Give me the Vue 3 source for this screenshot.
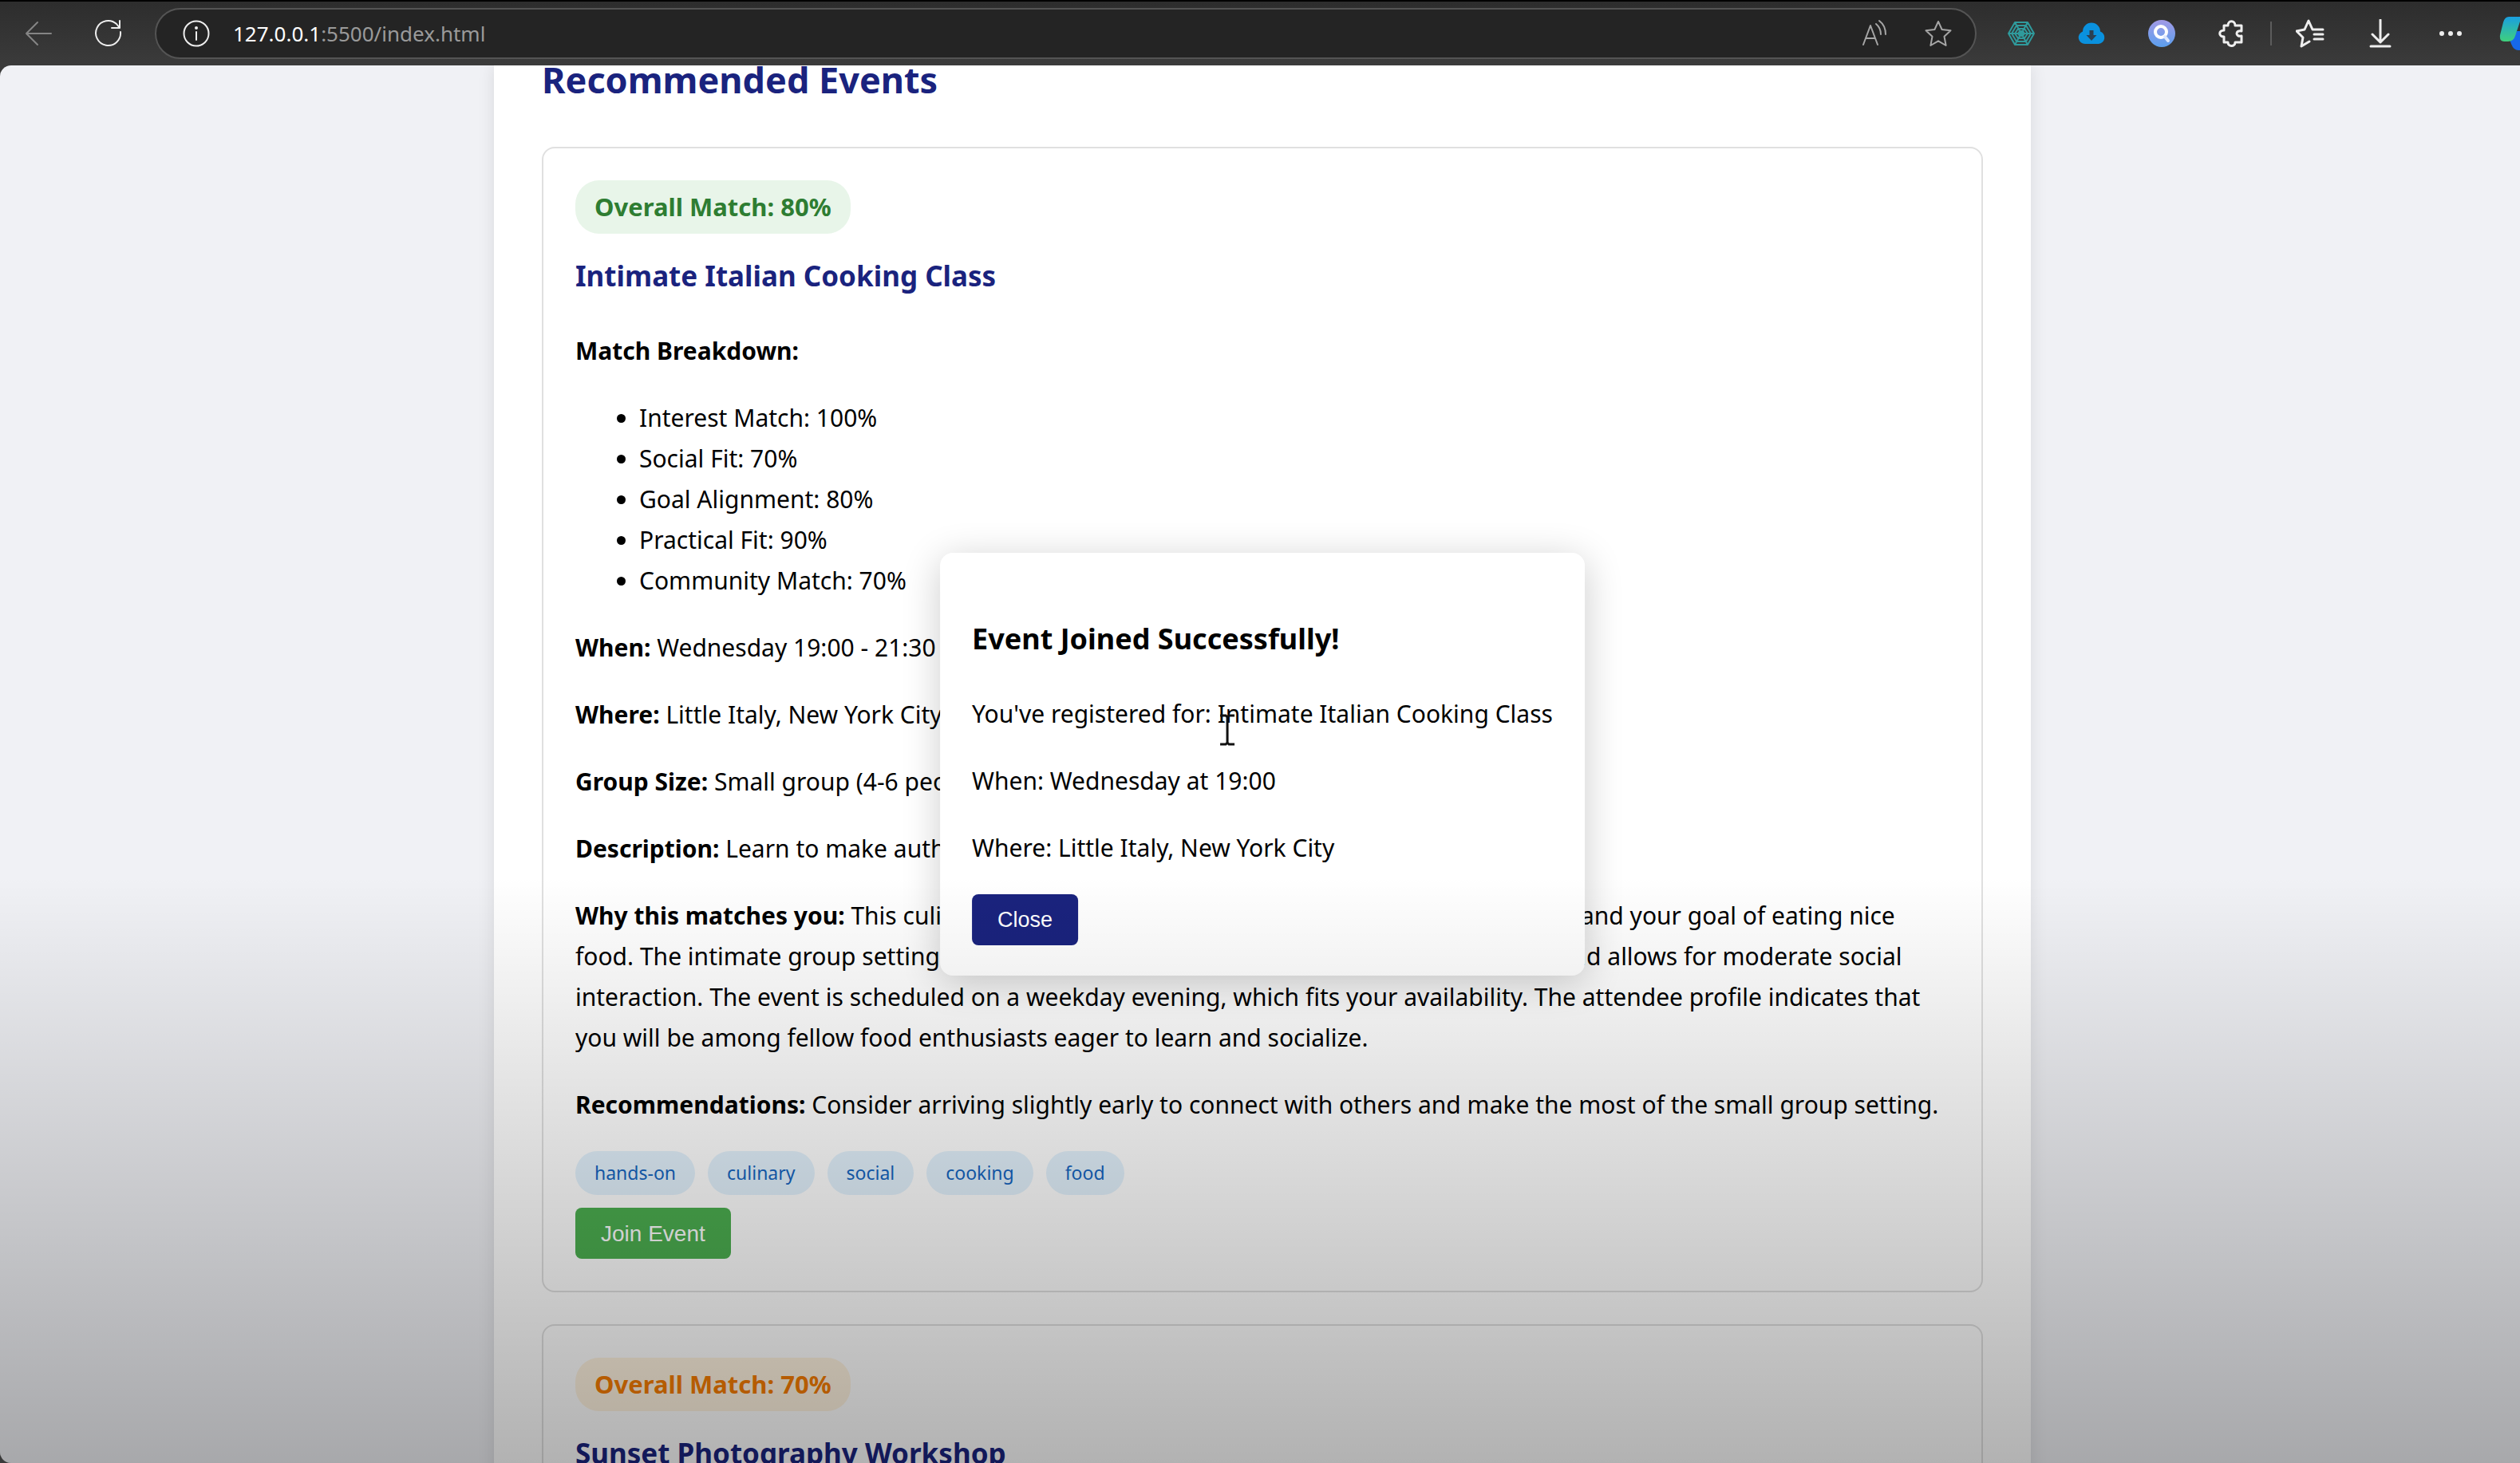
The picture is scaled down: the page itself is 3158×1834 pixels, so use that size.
<script setup>
const events = [
  {
    score: 80,
    level: 'high',
    title: 'Intimate Italian Cooking Class',
    breakdown: [
      ['Interest Match', 100],
      ['Social Fit', 70],
      ['Goal Alignment', 80],
      ['Practical Fit', 90],
      ['Community Match', 70],
    ],
    details: [
      ['When', 'Wednesday 19:00 - 21:30'],
      ['Where', 'Little Italy, New York City'],
      ['Group Size', 'Small group (4-6 people)'],
      ['Description', 'Learn to make authentic pasta'],
      [
        'Why this matches you',
        'This culinary class fits your interest in seasonal cooking together and your goal of eating nice food. The intimate group setting is just right for finding new friends over a simple meal and allows for moderate social interaction. The event is scheduled on a weekday evening, which fits your availability. The attendee profile indicates that you will be among fellow food enthusiasts eager to learn and socialize.',
      ],
      [
        'Recommendations',
        'Consider arriving slightly early to connect with others and make the most of the small group setting.',
      ],
    ],
    tags: ['hands-on', 'culinary', 'social', 'cooking', 'food'],
  },
  {
    score: 70,
    level: 'medium',
    title: 'Sunset Photography Workshop',
    breakdown: [],
    details: [],
    tags: [],
  },
]
</script>

<template>
  <div class="browser">
    <header class="toolbar">
      <button class="tool back" aria-label="Back">
        <svg width="36" height="36" viewBox="0 0 36 36"><path d="M34 18H3M17 4 3 18l14 14" /></svg>
      </button>
      <button class="tool reload" aria-label="Reload">
        <svg width="36" height="36" viewBox="0 0 36 36"><path d="M33 16a15.500 15.500 0 1 1-5-10l4 5M32 2v9h-10" /></svg>
      </button>
      <div class="address">
        <svg class="info" width="36" height="36" viewBox="0 0 36 36"><circle cx="18" cy="18" r="15.500" /><path d="M18 16v10" /><circle cx="18" cy="11" r="1" /></svg>
        <p class="url"><span>127.0.0.1</span>:5500/index.html</p>
        <button class="tool dim read" aria-label="Read aloud">
          <svg width="36" height="36" viewBox="0 0 36 36"><path d="M4 32 13 8l9 24M7 24h12M20 6q6 5 6 13M24 2q8 6 8 17" /></svg>
        </button>
        <button class="tool dim" aria-label="Add to favourites">
          <svg width="36" height="36" viewBox="0 0 36 36"><path d="m18 3 4.600 10 10.900 1.300-8 7.400L27.600 33 18 27.300 8.400 33l2.100-11.300-8-7.400L13.400 13z" /></svg>
        </button>
      </div>
      <div class="extensions">
        <button class="tool web" aria-label="Web extension">
          <svg width="36" height="36" viewBox="0 0 36 36"><path d="M10 4h16l8 14-8 14H10L2 18zM12 8h12l6 10-6 10H12L6 18zM14 12h8l4 6-4 6h-8l-4-6zM16 15h4l2 3-2 3h-4l-2-3zM10 4l16 28M26 4 10 32M2 18h32" /></svg>
        </button>
        <button class="tool" aria-label="Cloud download">
          <svg width="36" height="36" viewBox="0 0 36 36"><path class="cloud" d="M10 31a8 8 0 0 1-3-15.500 11 11 0 0 1 22 0A8 8 0 0 1 27 31z" /><path class="hole" d="M15.500 14h5v6h4L18 27l-6.500-7h4z" /></svg>
        </button>
        <button class="tool" aria-label="Search extension">
          <svg width="36" height="36" viewBox="0 0 36 36">
            <defs><linearGradient id="lens" x1="0" y1="0" x2="0" y2="1"><stop offset="0" stop-color="#a29ae6" /><stop offset="1" stop-color="#5b9fee" /></linearGradient></defs>
            <circle cx="18" cy="18" r="17" fill="url(#lens)" stroke="none" /><circle cx="17" cy="16" r="7" stroke="#fff" stroke-width="4" /><path d="m22 22 4 5" stroke="#dbe6ff" stroke-width="4" />
          </svg>
        </button>
        <button class="tool" aria-label="Extensions">
          <svg class="bold" width="36" height="36" viewBox="0 0 36 36"><path d="M8 8h5c0-7 9-7 9 0h8v7c-8-2-8 8 0 6v8h-8c0 6-9 6-9 0H8v-7c-7 0-7-8 0-8z" /></svg>
        </button>
        <span class="divider"></span>
        <button class="tool" aria-label="Favourites">
          <svg class="bold" width="36" height="36" viewBox="0 0 36 36"><path d="M34 13H21L16 2l-5 11-10 2 8 8-2 11 10-6M23 19h11M23 25h11" /></svg>
        </button>
        <button class="tool" aria-label="Downloads">
          <svg class="bold" width="36" height="36" viewBox="0 0 36 36"><path d="M18 1v28M8 19l10 10 10-10M6 34h24" /></svg>
        </button>
        <button class="tool" aria-label="More">
          <svg width="36" height="36" viewBox="0 0 36 36"><g fill="#eee" stroke="none"><circle cx="7" cy="18" r="3" /><circle cx="18" cy="18" r="3" /><circle cx="29" cy="18" r="3" /></g></svg>
        </button>
        <button class="tool copilot" aria-label="Copilot">
          <svg width="26" height="50" viewBox="0 0 26 50">
            <defs><linearGradient id="wing" x1="0" y1="0" x2="0" y2="1"><stop offset="0" stop-color="#1a9fe0" /><stop offset="1" stop-color="#3fd07c" /></linearGradient></defs>
            <path d="M12 30q8-2 10-8h6v24h-4q-6 0-9-8z" fill="#1668ea" stroke="none" /><path d="M12 4h16l-8 24q-2 7-9 7H6q-6 0-5-8L5 11q2-7 7-7z" fill="url(#wing)" stroke="none" />
          </svg>
        </button>
      </div>
    </header>

    <main class="page">
      <section class="sheet">
        <h2>Recommended Events</h2>
        <article v-for="event in events" :key="event.title" class="card">
          <span class="score" :class="event.level">Overall Match: {{ event.score }}%</span>
          <h3>{{ event.title }}</h3>
          <template v-if="event.breakdown.length">
            <p><strong>Match Breakdown:</strong></p>
            <ul>
              <li v-for="[name, value] in event.breakdown" :key="name">{{ name }}: {{ value }}%</li>
            </ul>
          </template>
          <p v-for="[label, text] in event.details" :key="label"><strong>{{ label }}:</strong> {{ text }}</p>
          <div v-if="event.tags.length" class="tags">
            <span v-for="tag in event.tags" :key="tag" class="tag">{{ tag }}</span>
          </div>
          <button class="action join">Join Event</button>
        </article>
      </section>

      <div class="modal" role="dialog" aria-labelledby="joined">
        <h3 id="joined">Event Joined Successfully!</h3>
        <p>You've registered for: Intimate Italian Cooking Class</p>
        <p>When: Wednesday at 19:00</p>
        <p>Where: Little Italy, New York City</p>
        <button class="action close">Close</button>
        <svg class="caret" width="20" height="40" viewBox="0 0 20 40"><path d="M1 2h7l2 2 2-2h7M10 4v32M1 38h7l2-2 2 2h7" /></svg>
      </div>
      <div class="shade"></div>
    </main>
  </div>
</template>

<style>
body {
  margin: 0;
  background: #2b2b2d;
}
</style>

<style scoped>
* {
  box-sizing: border-box;
}

.browser {
  display: flex;
  flex-direction: column;
  height: 100vh;
  overflow: hidden;
  background: #3a3a3a;
  font-family: "Noto Sans", "Open Sans", sans-serif;
  font-size: 30px;
  line-height: 51px;
  color: #000;
}

button {
  font: inherit;
  border: 0;
  padding: 0;
}

/* Browser toolbar */
.toolbar {
  flex: none;
  display: flex;
  align-items: center;
  height: 82px;
  padding-left: 30px;
  border-top: 2px solid #000;
  background: linear-gradient(#2d2d2d, #3b3b3b);
}

.toolbar svg {
  display: block;
  fill: none;
  stroke: #eee;
  stroke-width: 2;
  stroke-linecap: round;
  stroke-linejoin: round;
}

.toolbar .bold {
  stroke-width: 3;
}

.tool {
  flex: none;
  background: none;
}

.toolbar .back svg {
  stroke: #858585;
}

.reload {
  margin: 0 40px 0 52px;
}

.address {
  flex: 1;
  display: flex;
  align-items: center;
  gap: 44px;
  height: 64px;
  padding: 0 28px 0 32px;
  border: 2px solid #545454;
  border-radius: 32px;
  background: #242424;
}

.url {
  flex: 1;
  margin: 0 0 0 -16px;
  font-size: 26px;
  color: #9a9a9a;
}

.url span {
  color: #fff;
}

.toolbar .dim svg {
  stroke: #a6a6a6;
}

.extensions {
  display: flex;
  align-items: center;
  gap: 52px;
  padding-left: 38px;
}

.toolbar .web svg {
  stroke: #2f9a9c;
}

.toolbar .cloud {
  fill: #0a91de;
  stroke: none;
}

.toolbar .hole {
  fill: #2b3f52;
  stroke: none;
}

.divider {
  width: 2px;
  height: 30px;
  margin: 0 -22px;
  background: #5c5c5c;
}

.copilot {
  margin-left: -9px;
}

/* Page: runs slightly past the right edge of the window */
.page {
  position: relative;
  flex: 1;
  min-height: 0;
  overflow: hidden;
  margin-right: -6px;
  padding: 0 40px;
  border-radius: 14px 0 0 14px;
  background: #f0f1f5;
}

.sheet {
  max-width: 1926px;
  margin: 0 auto;
  padding: 0 60px 60px;
  background: #fff;
  box-shadow: 0 0 20px rgba(0, 0, 0, 0.1);
}

h2 {
  margin: 0 0 66px;
  font-size: 45px;
  line-height: 36px;
  color: #1a237e;
}

h3 {
  margin: 0 0 38px;
  font-size: 35px;
  line-height: 60px;
}

p {
  margin: 0 0 33px;
}

.card {
  margin-bottom: 40px;
  padding: 40px;
  border: 2px solid #e0e0e0;
  border-radius: 16px;
}

.card h3 {
  margin-top: 23px;
  color: #1a237e;
}

.score {
  display: block;
  width: fit-content;
  padding: 8px 24px;
  border-radius: 30px;
  font-size: 31px;
  font-weight: 700;
}

.high {
  background: #e8f5e9;
  color: #2e7d32;
}

.medium {
  background: #fff3e0;
  color: #f57c00;
}

ul {
  margin: 0 0 33px;
  padding-left: 80px;
}

.tags {
  display: flex;
  gap: 16px;
  margin-bottom: 16px;
}

.tag {
  padding: 8px 24px;
  border-radius: 28px;
  background: #e3f2fd;
  font-size: 23px;
  line-height: 39px;
  color: #1565c0;
}

.action {
  display: block;
  height: 64px;
  padding: 0 32px;
  border-radius: 8px;
  font-family: "Liberation Sans", Arial, sans-serif;
  font-size: 28px;
  color: #fff;
}

.join {
  background: #4caf50;
}

.close {
  background: #1a237e;
  font-size: 27px;
}

.modal {
  position: absolute;
  top: 50%;
  left: 50%;
  transform: translate(-50%, -50%);
  padding: 78px 40px 38px;
  border-radius: 16px;
  background: #fff;
  box-shadow: 0 8px 48px rgba(0, 0, 0, 0.2);
  white-space: nowrap;
}

.modal h3 {
  font-size: 36px;
}

.caret {
  position: absolute;
  top: 202px;
  left: 350px;
  fill: none;
  stroke: #111;
  stroke-width: 3;
}

.shade {
  position: absolute;
  inset: 58% 0 0;
  background: linear-gradient(rgba(0, 0, 0, 0), rgba(0, 0, 0, 0.3));
  pointer-events: none;
}
</style>
